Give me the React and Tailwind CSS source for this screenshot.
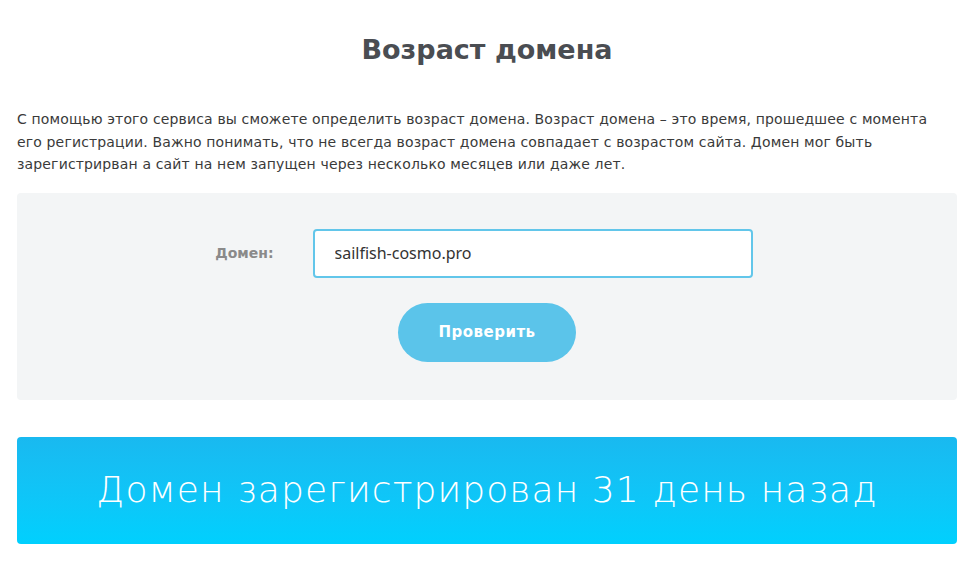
export default function App() {
  return (
    <div className="min-h-screen bg-white text-[#333] font-['DejaVu_Sans',sans-serif]">
      <div className="px-[17px] pt-[30px]">
        <h1 className="text-center text-[27px] font-bold text-[#4a4d52] leading-[40px]">
          Возраст домена
        </h1>

        <p className="mt-[38px] text-[14px] leading-[22.5px] tracking-[0.15px] text-[#3a3a3a]">
          С помощью этого сервиса вы сможете определить возраст домена. Возраст домена – это время, прошедшее с момента
          <br />
          его регистрации. Важно понимать, что не всегда возраст домена совпадает с возрастом сайта. Домен мог быть
          <br />
          зарегистрирван а сайт на нем запущен через несколько месяцев или даже лет.
        </p>

        {/* Form */}
        <div className="mt-[17px] bg-[#f3f5f6] rounded-[4px] h-[207px] flex flex-col items-center pt-[36px]">
          <div className="flex items-center">
            <label className="w-[255px] text-right pr-[39px] text-[14px] font-bold text-[#8a8a8a]">
              Домен:
            </label>
            <input
              defaultValue="sailfish-cosmo.pro"
              className="w-[440px] h-[49px] bg-white border-2 border-[#62c6ea] rounded-[4px] px-[20px] text-[16px] text-[#333] outline-none font-['Noto_Sans',sans-serif]"
            />
            <div className="w-[164px]" />
          </div>
          <button className="mt-[25px] w-[178px] h-[59px] rounded-full bg-[#5bc4ea] text-white text-[15px] tracking-[0.5px] font-bold">
            Проверить
          </button>
        </div>

        {/* Result */}
        <div className="mt-[37px] h-[107px] rounded-[4px] bg-gradient-to-b from-[#19b9f0] to-[#00d0fe] flex items-center justify-center">
          <span className="text-white text-[36px] tracking-[1.1px] font-extralight">
            Домен зарегистрирован 31 день назад
          </span>
        </div>
      </div>
    </div>
  );
}
